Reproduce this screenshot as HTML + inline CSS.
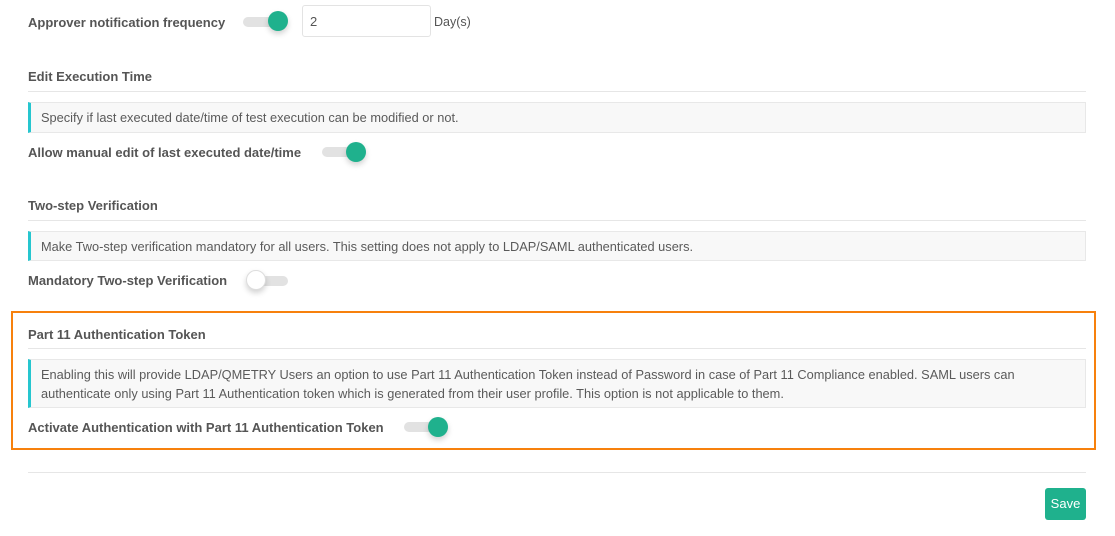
<!DOCTYPE html>
<html><head><style>
body{margin:0;width:1115px;height:536px;background:#fff;position:relative;font-family:"Liberation Sans",sans-serif;color:#505050;overflow:hidden}
.a{position:absolute;white-space:nowrap}
.lbl{font-weight:bold;font-size:13px;color:#555;letter-spacing:0px}
.hr{position:absolute;left:28px;width:1058px;height:1px;background:#e6e6e6}
.info{position:absolute;left:28px;width:1058px;background:#f8f8f8;border:1px solid #e8e8e8;border-left:3px solid #26c6cf;font-size:12.8px;color:#5a5a5a;box-sizing:border-box;padding:0 0 0 10px;line-height:19px}
.track{position:absolute;height:10px;border-radius:5px;background:#e2e2e2}
.knob{position:absolute;width:20px;height:20px;border-radius:50%;background:#1fb18d;box-shadow:0 3px 6px rgba(0,0,0,.18)}
.off{background:#fff;border:1px solid #ddd;box-sizing:border-box}
</style></head><body>
<div class="a lbl" style="left:28px;top:15px">Approver notification frequency</div>
<div class="track" style="left:243px;top:17px;width:44px"></div>
<div class="knob" style="left:268px;top:11px"></div>
<div class="a" style="left:302px;top:5px;width:129px;height:32px;border:1px solid #e3e3e3;border-radius:3px;box-sizing:border-box;font-size:13px;color:#555;padding:8px 0 0 7px">2</div>
<div class="a" style="left:434px;top:15px;font-size:12.5px;color:#555">Day(s)</div>

<div class="a lbl" style="left:28px;top:69px">Edit Execution Time</div>
<div class="hr" style="top:91px"></div>
<div class="info" style="top:102px;height:31px;padding-top:5px">Specify if last executed date/time of test execution can be modified or not.</div>
<div class="a lbl" style="left:28px;top:145px">Allow manual edit of last executed date/time</div>
<div class="track" style="left:322px;top:147px;width:44px"></div>
<div class="knob" style="left:346px;top:142px"></div>

<div class="a lbl" style="left:28px;top:198px">Two-step Verification</div>
<div class="hr" style="top:220px"></div>
<div class="info" style="top:231px;height:30px;padding-top:5px">Make Two-step verification mandatory for all users. This setting does not apply to LDAP/SAML authenticated users.</div>
<div class="a lbl" style="left:28px;top:273px">Mandatory Two-step Verification</div>
<div class="track" style="left:256px;top:276px;width:32px"></div>
<div class="knob off" style="left:246px;top:270px"></div>

<div class="a" style="left:11px;top:311px;width:1085px;height:139px;border:2px solid #f7810d;box-sizing:border-box"></div>
<div class="a lbl" style="left:28px;top:327px">Part 11 Authentication Token</div>
<div class="hr" style="top:348px"></div>
<div class="info" style="top:359px;height:49px;padding-top:5px">Enabling this will provide LDAP/QMETRY Users an option to use Part 11 Authentication Token instead of Password in case of Part 11 Compliance enabled. SAML users can<br>authenticate only using Part 11 Authentication token which is generated from their user profile. This option is not applicable to them.</div>
<div class="a lbl" style="left:28px;top:420px">Activate Authentication with Part 11 Authentication Token</div>
<div class="track" style="left:404px;top:422px;width:44px"></div>
<div class="knob" style="left:428px;top:417px"></div>

<div class="hr" style="top:472px"></div>
<div class="a" style="left:1045px;top:488px;width:41px;height:32px;background:#1fb18d;border-radius:3px;color:#fff;font-size:13px;text-align:center;line-height:32px">Save</div>
</body></html>
